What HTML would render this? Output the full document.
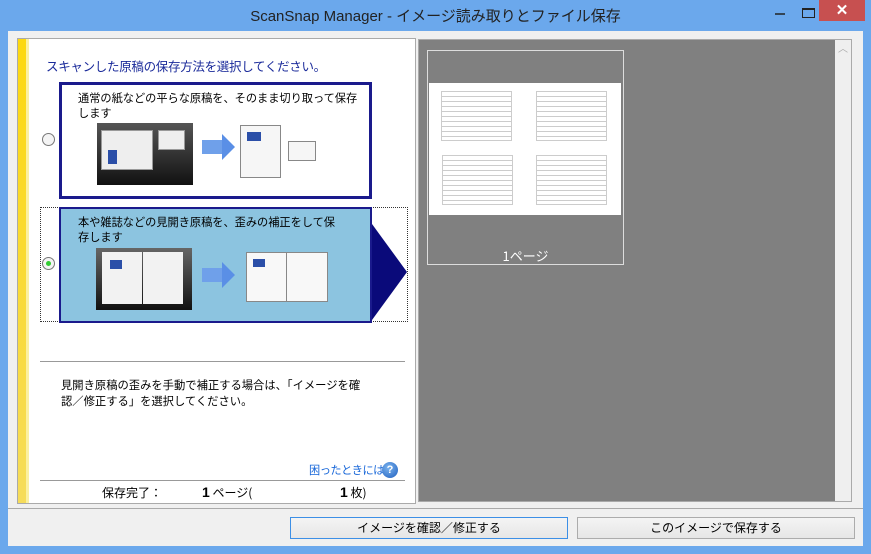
<!DOCTYPE html>
<html><head><meta charset="utf-8"><style>
*{margin:0;padding:0;box-sizing:border-box}
body{width:871px;height:554px;background:#6ba8ec;position:relative;overflow:hidden;font-family:"Liberation Sans","Noto Sans CJK JP",sans-serif;font-size:12px;color:#000}
.a{position:absolute;white-space:nowrap}
.jp{font-family:"Noto Sans CJK JP",sans-serif}
</style></head><body>
<div class="a" style="left:0;top:0;width:871px;height:31px;text-align:center;line-height:32px;font-size:15px;color:#222">ScanSnap Manager - <span class="jp">イメージ読み取りとファイル保存</span></div>
<div class="a" style="left:775px;top:13px;width:10px;height:2px;background:#345"></div>
<div class="a" style="left:802px;top:8px;width:13px;height:10px;border:1px solid #222;border-top-width:2px"></div>
<div class="a" style="left:819px;top:0;width:46px;height:21px;background:#c75050;color:#fff;text-align:center;font-size:15px;line-height:21px;font-weight:bold">✕</div>
<div class="a" style="left:8px;top:31px;width:855px;height:515px;background:#f0f0f0"></div>
<!-- left panel -->
<div class="a" style="left:17px;top:38px;width:399px;height:466px;background:#fff;border:1px solid #aaa"></div>
<div class="a" style="left:18px;top:39px;width:11px;height:464px;background:linear-gradient(#fcd80f,#f6dc5a)"></div>
<div class="a" style="left:26px;top:39px;width:3px;height:464px;background:#fbf0a0"></div>
<div class="a jp" style="left:46px;top:56px;font-size:12.5px;letter-spacing:-0.3px;color:#1a2a9a">スキャンした原稿の保存方法を選択してください。</div>
<!-- option 1 -->
<div class="a" style="left:59px;top:82px;width:313px;height:117px;border:3px solid #1a1a8c;background:#fff"></div>
<div class="a jp" style="left:78px;top:91px;font-size:11.2px;line-height:15px">通常の紙などの平らな原稿を、そのまま切り取って保存<br>します</div>
<div class="a" style="left:42px;top:133px;width:13px;height:13px;border:1px solid #777;border-radius:50%;background:#f4f4f4"></div>
<div class="a" style="left:97px;top:123px;width:96px;height:62px;background:linear-gradient(#555,#111)"></div>
<div class="a" style="left:101px;top:130px;width:52px;height:40px;background:#eee;border:1px solid #999"></div>
<div class="a" style="left:108px;top:150px;width:9px;height:14px;background:#2b4fa8"></div>
<div class="a" style="left:158px;top:130px;width:27px;height:20px;background:#eee;border:1px solid #999"></div>
<div class="a" style="left:202px;top:140px;width:20px;height:14px;background:#6fa0ea"></div>
<div class="a" style="left:222px;top:134px;border-left:13px solid #5a8fe6;border-top:13px solid transparent;border-bottom:13px solid transparent"></div>
<div class="a" style="left:240px;top:125px;width:41px;height:53px;background:#f6f6f6;border:1px solid #888"></div>
<div class="a" style="left:247px;top:132px;width:14px;height:9px;background:#2b4fa8"></div>
<div class="a" style="left:288px;top:141px;width:28px;height:20px;background:#f6f6f6;border:1px solid #888"></div>
<!-- option 2 -->
<div class="a" style="left:40px;top:207px;width:368px;height:115px;border:1px dotted #333"></div>
<div class="a" style="left:59px;top:207px;width:313px;height:116px;border:2px solid #1a1a8c;background:#8cc4e0"></div>
<div class="a" style="left:372px;top:224px;border-left:35px solid #0a0a7a;border-top:48px solid transparent;border-bottom:48px solid transparent"></div>
<div class="a jp" style="left:78px;top:215px;font-size:11.2px;line-height:15px">本や雑誌などの見開き原稿を、歪みの補正をして保<br>存します</div>
<div class="a" style="left:42px;top:257px;width:13px;height:13px;border:1px solid #777;border-radius:50%;background:#f4f4f4"></div>
<div class="a" style="left:46px;top:261px;width:5px;height:5px;border-radius:50%;background:#3c3"></div>
<div class="a" style="left:96px;top:248px;width:96px;height:62px;background:linear-gradient(#666,#111)"></div>
<div class="a" style="left:102px;top:252px;width:40px;height:52px;background:#f2f2f2"></div>
<div class="a" style="left:143px;top:252px;width:40px;height:52px;background:#f2f2f2"></div>
<div class="a" style="left:110px;top:260px;width:12px;height:9px;background:#2b4fa8"></div>
<div class="a" style="left:202px;top:268px;width:20px;height:14px;background:#6fa0ea"></div>
<div class="a" style="left:222px;top:262px;border-left:13px solid #5a8fe6;border-top:13px solid transparent;border-bottom:13px solid transparent"></div>
<div class="a" style="left:246px;top:252px;width:82px;height:50px;background:#f8f8f8;border:1px solid #888"></div>
<div class="a" style="left:286px;top:252px;width:1px;height:50px;background:#888"></div>
<div class="a" style="left:253px;top:259px;width:12px;height:8px;background:#2b4fa8"></div>
<div class="a" style="left:40px;top:361px;width:365px;height:1px;background:#999"></div>
<div class="a jp" style="left:61px;top:377px;font-size:11.3px;line-height:16px">見開き原稿の歪みを手動で補正する場合は、「イメージを確<br>認／修正する」を選択してください。</div>
<div class="a jp" style="left:309px;top:462px;font-size:11.2px;letter-spacing:-0.5px;color:#1565d8">困ったときには</div>
<div class="a" style="left:382px;top:462px;width:16px;height:16px;border-radius:50%;background:radial-gradient(circle at 40% 35%,#7ab3ee,#1f5fbf);color:#fff;font-size:11px;font-weight:bold;text-align:center;line-height:16px">?</div>
<div class="a" style="left:40px;top:480px;width:365px;height:1px;background:#999"></div>
<div class="a jp" style="left:102px;top:484px;font-size:12px">保存完了：</div>
<div class="a jp" style="left:202px;top:484px;font-size:12px"><b style="font-family:'Liberation Sans';font-size:14px">1</b> ページ(</div>
<div class="a jp" style="left:340px;top:484px;font-size:12px"><b style="font-family:'Liberation Sans';font-size:14px">1</b> 枚)</div>
<!-- right -->
<div class="a" style="left:418px;top:39px;width:434px;height:463px;background:#f0f0f0;border:1px solid #aaa"></div>
<div class="a" style="left:419px;top:40px;width:416px;height:461px;background:#808080"></div>
<div class="a" style="left:835px;top:40px;width:16px;height:461px;background:#efefef;color:#aaa;font-size:10px;text-align:center">︿</div>
<div class="a" style="left:427px;top:50px;width:197px;height:215px;border:1px solid #ddd"></div>
<div class="a" style="left:429px;top:83px;width:192px;height:132px;background:#fff"></div>
<div class="a" style="left:441px;top:91px;width:71px;height:50px;border:1px solid #ccc;background:repeating-linear-gradient(#fff 0 4px,#ccc 4px 5px)"></div>
<div class="a" style="left:536px;top:91px;width:71px;height:50px;border:1px solid #ccc;background:repeating-linear-gradient(#fff 0 4px,#ccc 4px 5px)"></div>
<div class="a" style="left:442px;top:155px;width:71px;height:50px;border:1px solid #ccc;background:repeating-linear-gradient(#fff 0 4px,#ccc 4px 5px)"></div>
<div class="a" style="left:536px;top:155px;width:71px;height:50px;border:1px solid #ccc;background:repeating-linear-gradient(#fff 0 4px,#ccc 4px 5px)"></div>
<div class="a jp" style="left:427px;top:246px;width:197px;text-align:center;color:#fff;font-size:13px">1ページ</div>
<!-- bottom -->
<div class="a" style="left:8px;top:508px;width:855px;height:1px;background:#aaa"></div>
<div class="a jp" style="left:290px;top:517px;width:278px;height:22px;border:1px solid #3c8fe6;background:linear-gradient(#f4f4f4,#e6e6e6);text-align:center;line-height:20px;font-size:12px">イメージを確認／修正する</div>
<div class="a jp" style="left:577px;top:517px;width:278px;height:22px;border:1px solid #acacac;background:linear-gradient(#f4f4f4,#e6e6e6);text-align:center;line-height:20px;font-size:12px">このイメージで保存する</div>
</body></html>
